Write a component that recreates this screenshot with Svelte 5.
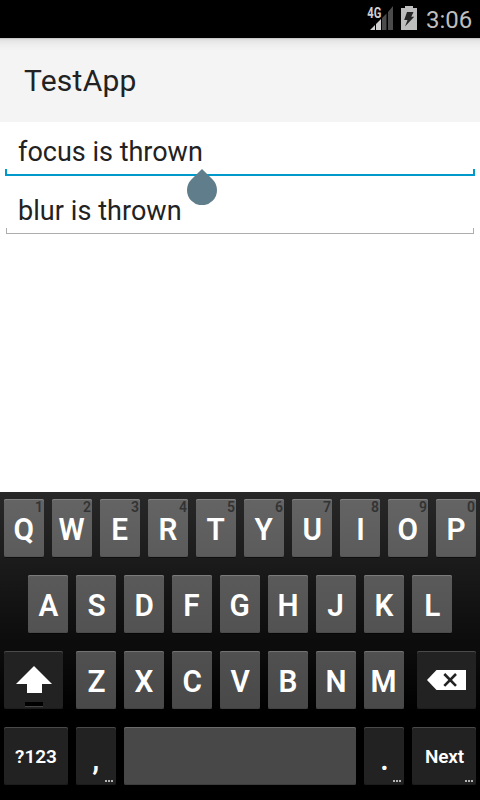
<script>
  const top = [...'QWERTYUIOP'].map((letter, i) => ({ letter, hint: (i + 1) % 10 }));
  const home = [...'ASDFGHJKL'];
  const bottom = [...'ZXCVBNM'];
</script>

<div class="screen">
  <header class="status">
    <svg class="signal" width="28" height="26" viewBox="0 0 28 26">
      <path d="M3 25 L8 20 V25Z M9 19 L14 14 V25 H9Z" fill="#d0d0d0" />
      <path d="M15 13 L19.5 8.5 V25 H15Z M21 7 L26 1 V25 H21Z" fill="#4b4b4b" />
      <text x="0.3" y="12.5" textLength="14" lengthAdjust="spacingAndGlyphs">4G</text>
    </svg>
    <svg class="battery" width="16" height="24" viewBox="0 0 16 24">
      <path d="M4 0 H12 V2 H16 V24 H0 V2 H4Z" fill="#bebebe" />
      <path d="M6 6 H12.5 L10.3 10.7 H13.2 L4 20.5 L6.5 14 H3.2Z" fill="#262626" />
    </svg>
    <span class="clock">3:06</span>
  </header>

  <div class="titlebar"><h1>TestApp</h1></div>

  <main>
    <div class="field focused">
      <span>focus is thrown</span>
      <svg class="handle" width="30" height="36" viewBox="0 0 30 36">
        <path d="M15 0 L25.6 10.6 A15 15 0 1 1 4.4 10.6Z" fill="#607d8b" />
      </svg>
    </div>
    <div class="field second"><span>blur is thrown</span></div>
  </main>

  <section class="keyboard">
    <div class="row r1">
      {#each top as key}
        <div class="key"><span class="letter">{key.letter}</span><span class="hint">{key.hint}</span></div>
      {/each}
    </div>
    <div class="row r2">
      {#each home as letter}
        <div class="key"><span class="letter">{letter}</span></div>
      {/each}
    </div>
    <div class="row r3">
      <div class="key dark shift">
        <svg width="36" height="27" viewBox="0 0 36 27">
          <path d="M18 0 L36 18 H26 V27 H11 V18 H0Z" fill="#fff" />
        </svg>
        <span class="led"></span>
      </div>
      {#each bottom as letter}
        <div class="key"><span class="letter">{letter}</span></div>
      {/each}
      <div class="key dark delete">
        <svg width="39" height="20" viewBox="0 0 39 20">
          <path d="M0 10 L9.5 0 H39 V20 H9.5Z" fill="#fff" />
          <path d="M17.3 4 L29 15.8 M29 4 L17.3 15.8" stroke="#222" stroke-width="2.6" />
        </svg>
      </div>
    </div>
    <div class="row r4">
      <div class="key dark wide"><span class="label">?123</span></div>
      <div class="key dark"><span class="letter">,</span><span class="more"><i></i><i></i><i></i></span></div>
      <div class="key space"></div>
      <div class="key dark"><span class="letter">.</span><span class="more"><i></i><i></i><i></i></span></div>
      <div class="key dark wide"><span class="label next">Next</span><span class="more"><i></i><i></i><i></i></span></div>
    </div>
  </section>
</div>

<style>
  .screen {
    width: 480px;
    height: 800px;
    display: flex;
    flex-direction: column;
    background: #fff;
    color: #222;
    font-family: Roboto, sans-serif;
    overflow: hidden;
  }
  .status {
    flex: none;
    box-sizing: border-box;
    height: 38px;
    background: #000;
    display: flex;
    align-items: flex-start;
    padding: 6px 9px 0 367px;
  }
  .signal { flex: none; margin-top: -1px; }
  .signal text { font: bold 14px Roboto, sans-serif; fill: #d0d0d0; }
  .battery { flex: none; margin-left: 6px; }
  .clock {
    margin-left: 9px;
    font-size: 24px;
    line-height: 28px;
    color: #bebebe;
    white-space: nowrap;
  }
  .titlebar {
    flex: none;
    box-sizing: border-box;
    height: 84px;
    display: flex;
    align-items: center;
    padding: 2px 0 0 24px;
    background: linear-gradient(#b4b4b4 0, #dcdcdc 1px, #e6e6e6 3px, #eeeeee 7px, #f4f4f4 13px);
  }
  h1 { margin: 0; font-size: 30px; font-weight: 400; line-height: 36px; letter-spacing: 0.25px; }
  main {
    flex: 1;
    display: flex;
    flex-direction: column;
    padding: 0 5px;
  }
  .field {
    position: relative;
    box-sizing: border-box;
    height: 54px;
    padding: 14px 13px 0;
    font-size: 27px;
    line-height: 32px;
    white-space: nowrap;
  }
  .field::after {
    content: '';
    position: absolute;
    box-sizing: border-box;
    left: 0;
    right: 0;
    bottom: 0;
    height: 7px;
    border: 2px solid #0099cc;
    border-top: 0;
  }
  .second { margin-top: 5px; height: 53px; letter-spacing: 0.06px; }
  .second::after { left: 1px; right: 1px; height: 6px; border: 1px solid #adadad; border-top: 0; }
  .handle { position: absolute; left: 182px; top: 47px; z-index: 1; }
  .keyboard {
    flex: none;
    box-sizing: border-box;
    height: 308px;
    padding: 7px 4px 0;
    display: flex;
    flex-direction: column;
    gap: 18px;
    background: linear-gradient(#282828 0, #0c0c0c 150px, #0c0c0c 160px, #000 220px, #000 100%);
  }
  .row { display: flex; gap: 8px; height: 58px; }
  .r2 { padding: 0 24px; }
  .key {
    flex: none;
    position: relative;
    box-sizing: border-box;
    width: 40px;
    height: 58px;
    border-radius: 2px;
    display: flex;
    align-items: center;
    justify-content: center;
    background: linear-gradient(#646464, #5b5b5b);
    box-shadow: inset 0 1px #828282, inset 0 -1px #555, 0 1px rgba(0, 0, 0, 0.5);
    color: #fff;
    font-weight: 600;
  }
  .r2 .key { background: linear-gradient(#5a5a5a, #525252); box-shadow: inset 0 1px #7b7b7b, inset 0 -1px #4b4b4b, 0 1px rgba(0, 0, 0, 0.5); }
  .r3 .key { background: linear-gradient(#505050, #494949); box-shadow: inset 0 1px #737373, inset 0 -1px #424242; }
  .r4 .key { background: #484848; box-shadow: inset 0 1px #6b6b6b, inset 0 -1px #3c3c3c; }
  .row .key.dark { background: #222; box-shadow: inset 0 1px #4a4a4a, inset 0 -1px #1c1c1c; }
  .letter { font-size: 31px; line-height: 36px; margin-top: 4px; transform: scaleX(0.96); }
  .r4 .letter { margin-top: 8px; }
  .label { font-size: 19px; line-height: 24px; margin-top: 2px; }
  .next { letter-spacing: -0.2px; margin-left: 1px; }
  .hint {
    position: absolute;
    top: 0;
    right: 1px;
    font-size: 14px;
    line-height: 16px;
    color: #333;
  }
  .key.shift { width: 59px; margin-right: 5px; }
  .key.shift svg { margin: 0 0 2px; }
  .key.delete { width: 59px; margin-left: 5px; }
  .led {
    position: absolute;
    left: 21px;
    bottom: 2px;
    width: 18px;
    height: 4px;
    background: #000;
    border-bottom: 1px solid #444;
  }
  .key.wide { width: 64px; }
  .key.space { width: 232px; }
  .more { position: absolute; right: 3px; bottom: 3px; display: flex; gap: 1px; }
  .more i { width: 2px; height: 2px; background: #b4b4b4; }
</style>
